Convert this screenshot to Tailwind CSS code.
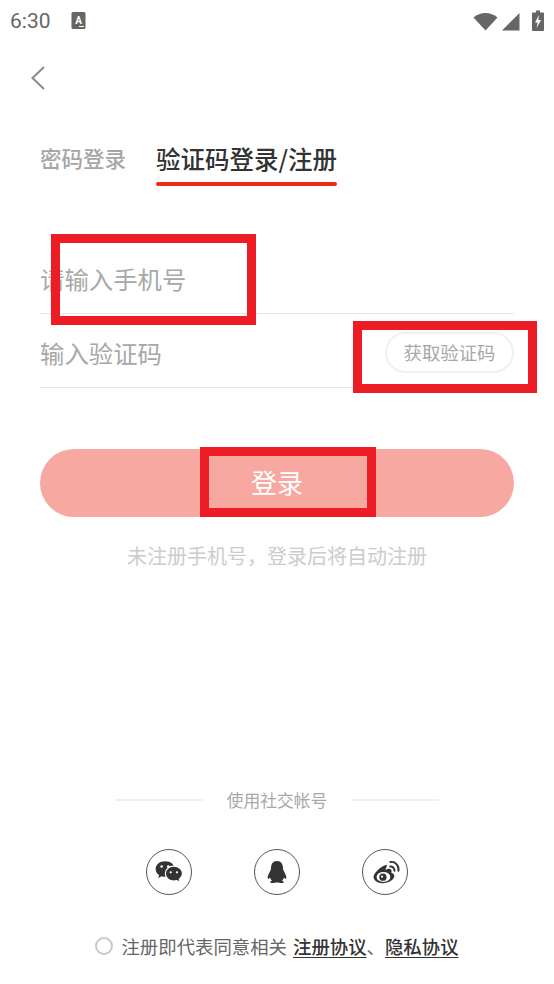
<!DOCTYPE html>
<html lang="zh"><head><meta charset="utf-8">
<script src="https://cdn.jsdelivr.net/npm/@tailwindcss/browser@4"></script>
</head>
<body class="bg-white">
<div class="relative w-[554px] h-[984px] overflow-hidden bg-white font-['Noto_Sans_CJK_SC','Noto_Sans',sans-serif]">
  <!-- status bar -->
  <div class="flex items-center h-[40px] pl-[10px] pr-[10px] pt-[1px]">
    <span class="font-['Roboto',sans-serif] text-[21px] leading-[24px] text-[#666666]">6:30</span>
    <svg class="ml-[20px]" width="15" height="17" viewBox="0 0 15 17"><rect x="0.5" y="0" width="14" height="17" rx="1.5" fill="#666"/><text x="7.5" y="11.5" text-anchor="middle" font-family="Roboto" font-weight="700" font-size="10" fill="#fff">A</text><rect x="8" y="14" width="5" height="1" fill="#fff"/></svg>
    <div class="ml-auto flex items-center gap-[4px]">
      <svg width="25" height="20" viewBox="0 0 25 20"><path d="M0.5 6.5 C7 0.5 18 0.5 24.5 6.5 L12.5 19.5 Z" fill="#666"/></svg>
      <svg width="18" height="20" viewBox="0 0 18 20"><path d="M0 19.5 L17.5 2 V19.5 Z" fill="#666"/></svg>
      <svg class="ml-[8px]" width="12" height="22" viewBox="0 0 12 22"><path d="M4 0.5 H8 V2.5 H11 A1 1 0 0 1 12 3.5 V20 A1 1 0 0 1 11 21 H1 A1 1 0 0 1 0 20 V3.5 A1 1 0 0 1 1 2.5 H4 Z" fill="#666"/><path d="M7 5 L3 12.5 H5.6 L4.6 18 L9 10 H6.3 Z" fill="#fff"/></svg>
    </div>
  </div>
  <!-- back -->
  <div class="h-[60px] pl-[30px] pt-[25px]">
    <svg width="16" height="26" viewBox="0 0 16 26" fill="none"><path d="M14 2 L2.5 13 L14 24" stroke="#8a8a8a" stroke-width="2"/></svg>
  </div>
  <!-- tabs -->
  <div class="flex items-start pl-[40px] mt-[40px]">
    <span class="text-[21.5px] leading-[36px] font-medium text-[#a6a6a6]">密码登录</span>
    <div class="ml-[30px] flex flex-col">
      <span class="text-[24.5px] leading-[38px] font-medium text-[#333333]">验证码登录/注册</span>
      <div class="h-[4px] mt-[4px] rounded-full bg-[#f02a14]"></div>
    </div>
  </div>
  <!-- form -->
  <div class="mx-[40px] mt-[54px] w-[474px]">
    <div class="flex items-center h-[74px] border-b border-[#e8e8e8] pt-[4px]">
      <span class="text-[24.4px] leading-[36px] text-[#a8a8a8]">请输入手机号</span>
    </div>
    <div class="flex items-center justify-between h-[74px] border-b border-[#e8e8e8] pt-[4px]">
      <span class="text-[24.4px] leading-[36px] text-[#a8a8a8]">输入验证码</span>
      <span class="flex items-center justify-center w-[129px] h-[41px] rounded-full border-2 border-[#f0f0f0] text-[18.4px] text-[#a8a8a8]">获取验证码</span>
    </div>
    <div class="flex items-center justify-center h-[68px] mt-[61px] pb-[4px] rounded-full bg-[#f7a8a1] text-[26px] text-white">登录</div>
    <p class="mt-[24px] text-center text-[20px] leading-[30px] text-[#cccccc]">未注册手机号&#xFF0C;登录后将自动注册</p>
  </div>
  <!-- social -->
  <div class="mt-[217px] flex items-center justify-center">
    <div class="w-[88px] h-[2px] bg-[#f0f0f0]"></div>
    <span class="mx-[24px] text-[16.8px] leading-[24px] text-[#a8a8a8]">使用社交帐号</span>
    <div class="w-[88px] h-[2px] bg-[#f0f0f0]"></div>
  </div>
  <div class="mt-[37px] flex justify-center gap-[62px]">
    <div class="w-[46px] h-[46px] rounded-full border border-[#555555] flex items-center justify-center">
      <svg width="33" height="26" viewBox="0 0 38 30"><path d="M14 2.5 C7.5 2.5 3 6.5 3 11.5 C3 14.5 4.5 17 7 18.6 L6 22 L10 20 C11.3 20.4 12.6 20.6 14 20.6 C20.5 20.6 25 16.5 25 11.5 C25 6.5 20.5 2.5 14 2.5 Z" fill="#333"/><path d="M24 8.2 C18.4 8.2 14.2 12 14.2 16.8 C14.2 21.6 18.4 25.4 24 25.4 C25.2 25.4 26.4 25.2 27.4 24.9 L31.4 27 L30.4 23.4 C32.6 21.8 34 19.4 34 16.8 C34 12 29.6 8.2 24 8.2 Z" fill="#333" stroke="#fff" stroke-width="1.4"/><circle cx="10" cy="8.6" r="1.5" fill="#fff"/><circle cx="17.6" cy="8.6" r="1.5" fill="#fff"/><circle cx="20.4" cy="15.4" r="1.3" fill="#fff"/><circle cx="27.6" cy="15.4" r="1.3" fill="#fff"/></svg>
    </div>
    <div class="w-[46px] h-[46px] rounded-full border border-[#555555] flex items-center justify-center">
      <svg width="22" height="24" viewBox="0 0 26 28"><path d="M13 1 C8 1 6 5 6 9 C6 10.5 5.6 11.5 4.8 13 C3.4 15.6 1.8 18.4 2 21 C2.2 22.6 3.2 22.8 4.8 20.6 C5.2 22 6 23.4 7 24.2 C5.4 24.8 4.6 25.4 4.8 26.2 C5 27.2 8 27.2 10.4 26.8 C11.4 26.6 12.2 26.4 13 26.4 C13.8 26.4 14.6 26.6 15.6 26.8 C18 27.2 21 27.2 21.2 26.2 C21.4 25.4 20.6 24.8 19 24.2 C20 23.4 20.8 22 21.2 20.6 C22.8 22.8 23.8 22.6 24 21 C24.2 18.4 22.6 15.6 21.2 13 C20.4 11.5 20 10.5 20 9 C20 5 18 1 13 1 Z" fill="#333"/></svg>
    </div>
    <div class="w-[46px] h-[46px] rounded-full border border-[#555555] flex items-center justify-center">
      <svg width="31" height="26" viewBox="0 0 36 30" fill="none"><path d="M19 6.5 C13.5 8 5 15 4.2 20 C3.6 25 9.5 28.6 16 28 C23 27.4 28.4 23.4 28.2 19.4 C28 17.2 26 16.4 24.6 16 C25.6 13.4 25 11.8 23.4 11.4 C21.6 11 19 12 17.6 12.8 C18.6 10.6 20.6 6.4 19 6.5 Z" fill="#333"/><ellipse cx="15.6" cy="20.8" rx="8" ry="5.8" fill="#fff"/><circle cx="15" cy="21" r="4.2" fill="#333"/><circle cx="14" cy="20.4" r="1.2" fill="#fff"/><path d="M23.4 8.6 C26 8.2 28.6 10.6 28.4 13.6 M23.6 3.4 C29 2.4 34.2 7.4 33 13.6" stroke="#333" stroke-width="2.2" stroke-linecap="round"/></svg>
    </div>
  </div>
  <!-- agreement -->
  <div class="mt-[37px] flex items-center justify-center text-[18.4px] leading-[28px] text-[#666666]">
    <span class="w-[18px] h-[18px] rounded-full border-2 border-[#c8c8c8] mr-[8px]"></span>
    <span>注册即代表同意相关</span>
    <span class="ml-[6px] font-medium text-[#333333] underline underline-offset-[3px]">注册协议</span>
    <span>、</span>
    <span class="font-medium text-[#333333] underline underline-offset-[3px]">隐私协议</span>
  </div>
  <!-- red annotation frames -->
  <div class="absolute left-[51px] top-[234px] w-[205px] h-[91px] border-[9px] border-[#ee1c25]"></div>
  <div class="absolute left-[353px] top-[321px] w-[184px] h-[72px] border-[9px] border-[#ee1c25]"></div>
  <div class="absolute left-[200px] top-[447px] w-[176px] h-[70px] border-[9px] border-[#ee1c25]"></div>
</div>
</body></html>
